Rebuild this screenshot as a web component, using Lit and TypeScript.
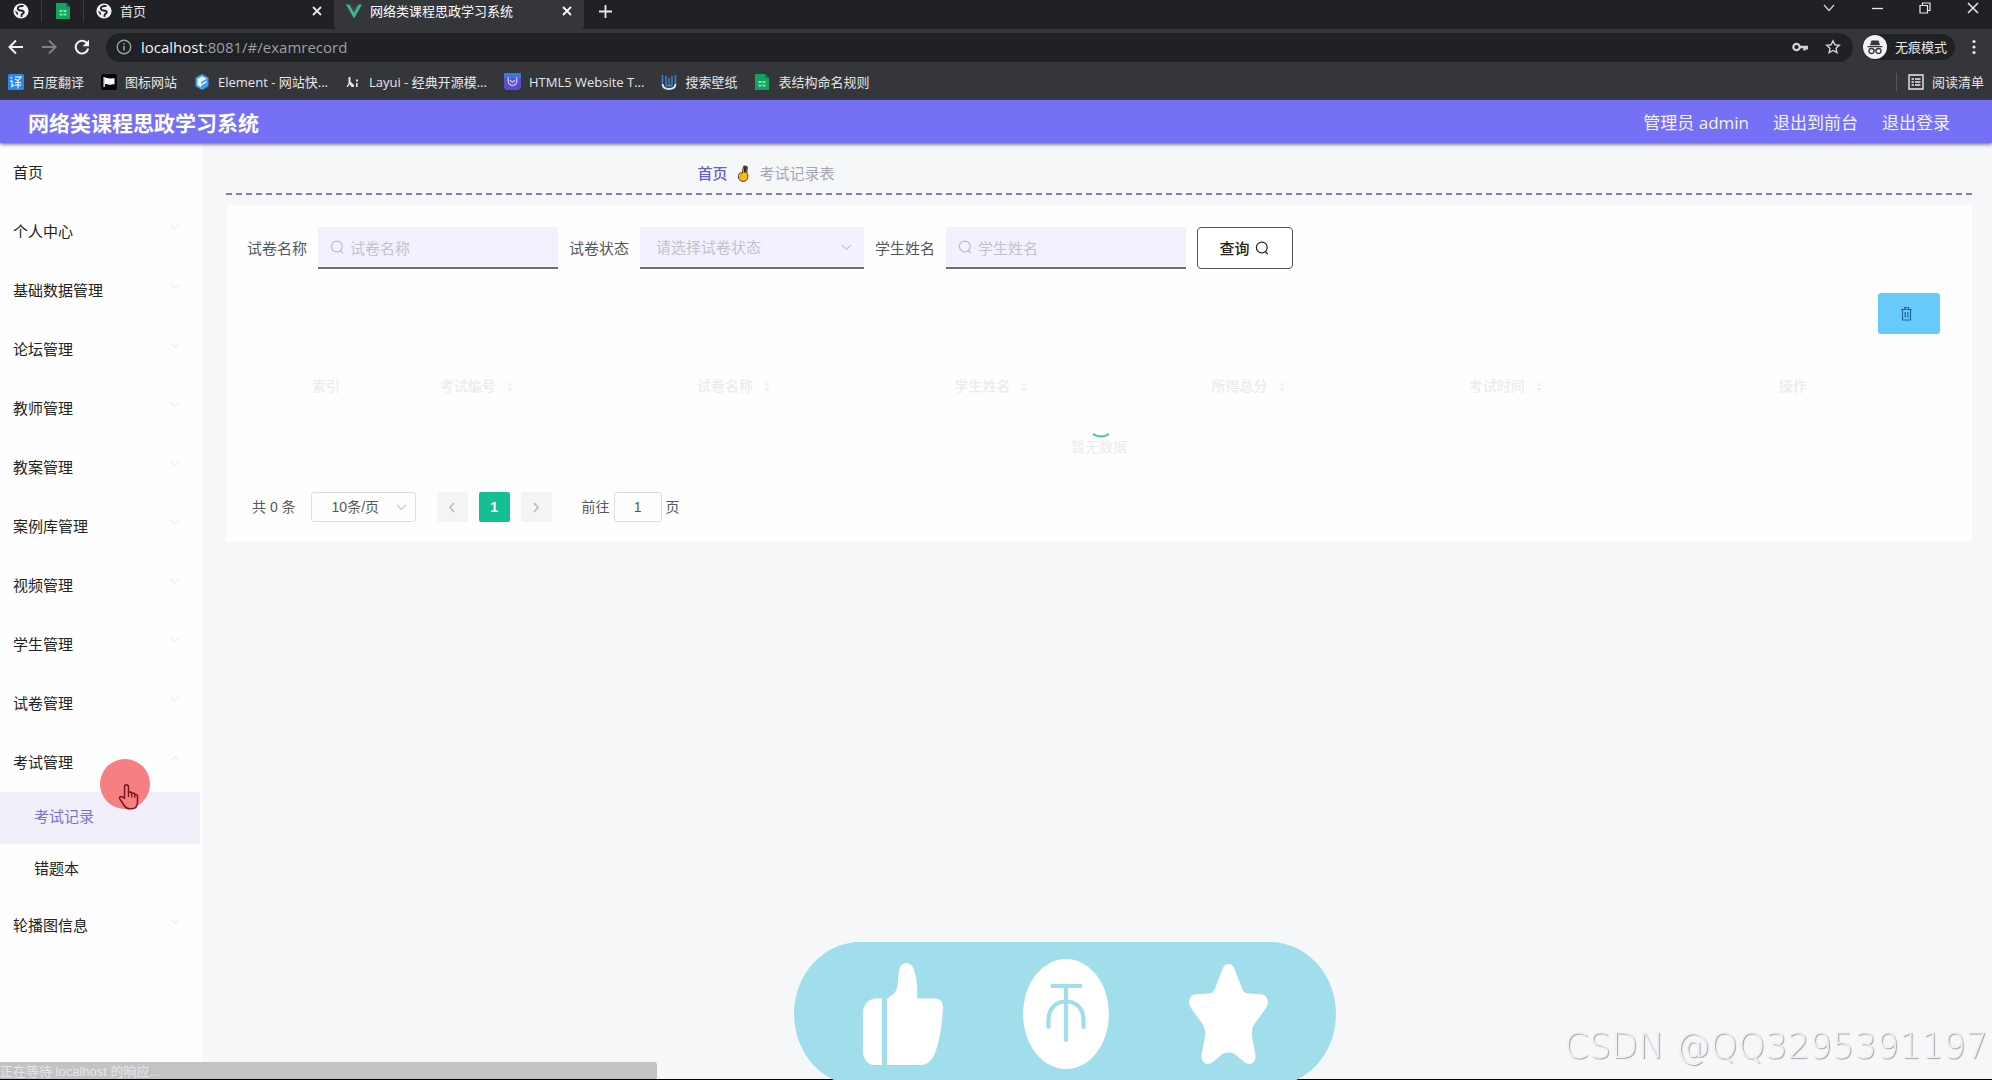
import { LitElement, html, css } from "lit";
import { customElement } from "lit/decorators.js";
import { classMap } from "lit/directives/class-map.js";

const reset = css`
  *,
  *::before,
  *::after {
    box-sizing: border-box;
  }
  button,
  input,
  select {
    font: inherit;
    color: inherit;
    margin: 0;
    padding: 0;
    border: 0;
    background: none;
    border-radius: 0;
    outline: 0;
  }
  button,
  select {
    cursor: pointer;
  }
  a {
    color: inherit;
    text-decoration: none;
  }
  svg {
    display: block;
    flex: none;
  }
`;

const globe = html`<svg width="16" height="16" viewBox="0 0 16 16">
  <circle cx="8" cy="8" r="7.6" fill="#f1f3f4" />
  <path d="M10.500 3.200C7.500 2.400 4.600 3.600 4.800 5.600c.2 1.900 2.400 1.700 4.200 2.100 1.700.4 2.200 1.300 1.500 2.400-.6 1-1.700.8-1.900 1.900-.1.700 0 1.200-.4 1.900" fill="none" stroke="#202124" stroke-width="1.900" />
  <path d="M1.800 7.500l2.800 1.800.6 2.700-1.400-.6z" fill="#202124" />
</svg>`;

const sheet = html`<svg width="16" height="18" viewBox="0 0 16 18">
  <path d="M1 1h10l4 4v12H1z" fill="#12a45f" />
  <path d="M11 1l4 4h-4z" fill="#0b7a45" />
  <path d="M4.500 8h3v2h-3zM8.500 8h3v2h-3zM4.500 11.500h3v2h-3zM8.500 11.500h3v2h-3z" fill="#7be3ad" />
</svg>`;

const vue = html`<svg width="16" height="15" viewBox="0 0 16 15">
  <path d="M0 .5h3.500L8 8.500 12.500.5H16L8 14.500z" fill="#41b883" />
  <path d="M3.500.5H6l2 3.600L10 .5h2.500L8 8.500z" fill="#35495e" />
</svg>`;

const closeIcon = html`<svg width="10" height="10" viewBox="0 0 10 10">
  <path d="M1 1l8 8M9 1L1 9" stroke="currentColor" stroke-width="1.800" />
</svg>`;

const bookmarkIcons = {
  translate: html`<svg width="16" height="16" viewBox="0 0 16 16">
    <rect width="16" height="16" rx="1.500" fill="#2b86f0" />
    <path d="M2.500 3l1.500 1.500M2 7h2v5.500l1.800-1.500M7 3h6l-3 3.500L7 5M7 8.500h6M6.500 11h7M10 7v7.500" fill="none" stroke="#fff" stroke-width="1.100" />
  </svg>`,
  flag: html`<svg width="16" height="16" viewBox="0 0 16 16">
    <rect width="16" height="16" rx="2" fill="#060606" />
    <path d="M2.500 3h1.300v10H2.500z" fill="#fff" />
    <path d="M3.800 4c2-1 3.500.6 5.200.6 1.600 0 2.500-.6 4.500-.3v6c-2-.4-3 .4-4.500.4-1.700 0-3.200-1.400-5.200-.4z" fill="#fff" />
  </svg>`,
  element: html`<svg width="16" height="16" viewBox="0 0 16 16">
    <path d="M8 0l6.500 3.800v8.400L8 16l-6.500-3.800V3.800z" fill="#3aa0f5" />
    <path d="M8 2.200l4.600 2.600L7 8v2l5.500-3.200v1.800L7 11.800v1.700L3.400 11V5z" fill="#e8f4ff" />
  </svg>`,
  layui: html`<svg width="16" height="16" viewBox="0 0 16 16">
    <path d="M3.500 3h2v4.500L9 11v2H6.500L4.500 10 3 13H1.500l2-4zM11 5.500h2v2h-2zM11 9h1.600v4H11z" fill="#e6e6e6" />
  </svg>`,
  html5: html`<svg width="17" height="17" viewBox="0 0 16 16">
    <path d="M0 0h16v14l-3 2H2l-2-2z" fill="#5a4ed0" />
    <path d="M0 0h16v5H0z" fill="#3f74d8" />
    <path d="M4 4v4c0 2 2 3.800 4 3.800s4-1.800 4-3.800V4M5.500 6.500L8 8.800l2.500-2.300" fill="none" stroke="#c9c4ff" stroke-width="1.200" />
  </svg>`,
  wallpaper: html`<svg width="16" height="16" viewBox="0 0 16 16">
    <path d="M1.500 10c.3 3.300 2.700 5 6.500 5s6.200-1.700 6.500-5" fill="none" stroke="#cfe4fa" stroke-width="2" />
    <path d="M1.500 1v9M14.500 1v9M5 2v8.500c0 2 6 2 6 0V2M8 4v8" fill="none" stroke="#3d7fc6" stroke-width="1.600" />
  </svg>`,
  sheet,
};

@customElement("browser-bar")
class BrowserBar extends LitElement {
  static styles = [
    reset,
    css`
      :host {
        display: block;
        color: #e4e6e9;
        font: 13px/18px "Open Sans", "Noto Sans CJK SC", sans-serif;
      }
      .strip {
        display: flex;
        height: 29px;
        background: #202124;
      }
      .tab {
        display: flex;
        align-items: center;
        gap: 8px;
        padding: 0 12px 7px;
        width: 250px;
      }
      .pinned {
        width: 42px;
        padding: 0 13px;
        border-right: 1px solid #3a3b3f;
        margin-bottom: 7px;
      }
      .active {
        background: #35363a;
        border-radius: 0 0 4px 4px;
        color: #fff;
      }
      .name {
        flex: 1;
        white-space: nowrap;
      }
      .plus {
        padding: 0 15px 7px;
      }
      .window {
        display: flex;
        gap: 34px;
        margin-left: auto;
        padding: 0 12px 0 0;
        height: 16px;
        align-items: center;
      }
      .tools {
        display: flex;
        align-items: center;
        height: 36px;
        background: #35363a;
        padding: 0 12px 0 8px;
      }
      .nav {
        display: flex;
        gap: 17px;
      }
      .address {
        display: flex;
        align-items: center;
        flex: 1;
        gap: 9px;
        height: 29px;
        margin: 0 10px 0 16px;
        padding: 0 12px 0 10px;
        border-radius: 15px;
        background: #202124;
        color: #9aa0a6;
        font-size: 15px;
      }
      .url {
        flex: 1;
      }
      .host {
        color: #f1f3f4;
      }
      .marks {
        display: flex;
        gap: 17px;
      }
      .incognito {
        display: flex;
        align-items: center;
        gap: 8px;
        height: 26px;
        padding-right: 8px;
        margin-right: 13px;
        border-radius: 13px;
        background: #202124;
      }
      .bookmarks {
        display: flex;
        align-items: center;
        gap: 17px;
        height: 35px;
        padding: 0 8px 2px;
        background: #35363a;
        white-space: nowrap;
      }
      .bookmark {
        display: flex;
        align-items: center;
        gap: 8px;
      }
      .reading {
        margin-left: auto;
        border-left: 1px solid #55565a;
        padding-left: 11px;
      }
    `,
  ];

  private bookmarks: [keyof typeof bookmarkIcons, string][] = [
    ["translate", "百度翻译"],
    ["flag", "图标网站"],
    ["element", "Element - 网站快..."],
    ["layui", "Layui - 经典开源模..."],
    ["html5", "HTML5 Website T..."],
    ["wallpaper", "搜索壁纸"],
    ["sheet", "表结构命名规则"],
  ];

  render() {
    return html`
      <div class="strip">
        <div class="tab pinned">${globe}</div>
        <div class="tab pinned">${sheet}</div>
        <div class="tab">
          ${globe}<span class="name">首页</span>
          <button aria-label="关闭">${closeIcon}</button>
        </div>
        <div class="tab active">
          ${vue}<span class="name">网络类课程思政学习系统</span>
          <button aria-label="关闭">${closeIcon}</button>
        </div>
        <button class="plus" aria-label="新标签页">
          <svg width="13" height="13" viewBox="0 0 13 13"><path d="M6.500 0v13M0 6.500h13" stroke="#e8eaed" stroke-width="1.800" /></svg>
        </button>
        <div class="window">
          <svg width="14" height="14" viewBox="0 0 14 14"><path d="M2 4l5 5.500L12 4" fill="none" stroke="#d5d6d8" stroke-width="1.200" /></svg>
          <svg width="14" height="14" viewBox="0 0 14 14"><path d="M2 7.500h11" stroke="#e8eaed" stroke-width="1.300" /></svg>
          <svg width="14" height="14" viewBox="0 0 14 14"><path d="M2 4.500h7.500V12H2zM4.500 4.500V2H12v7.500H9.500" fill="none" stroke="#e8eaed" stroke-width="1.200" /></svg>
          <svg width="14" height="14" viewBox="0 0 14 14"><path d="M2 2l10 10M12 2L2 12" stroke="#e8eaed" stroke-width="1.500" /></svg>
        </div>
      </div>
      <div class="tools">
        <div class="nav">
          <button aria-label="后退">
            <svg width="16" height="16" viewBox="0 0 16 16"><path d="M15 8H2M8 1.500L1.500 8 8 14.500" fill="none" stroke="#f1f3f4" stroke-width="2" /></svg>
          </button>
          <button aria-label="前进">
            <svg width="16" height="16" viewBox="0 0 16 16"><path d="M1 8h13M8 1.500L14.500 8 8 14.500" fill="none" stroke="#7d7f83" stroke-width="2" /></svg>
          </button>
          <button aria-label="重新加载">
            <svg width="16" height="16" viewBox="0 0 16 16">
              <path d="M13 4.200A6.300 6.300 0 1 0 14.200 9.500" fill="none" stroke="#f1f3f4" stroke-width="2" />
              <path d="M15 .8v6.400H8.600z" fill="#f1f3f4" />
            </svg>
          </button>
        </div>
        <div class="address">
          <svg width="16" height="16" viewBox="0 0 16 16">
            <circle cx="8" cy="8" r="6.800" fill="none" stroke="#9aa0a6" stroke-width="1.400" />
            <path d="M8 7v4.500M8 4.200v1.600" stroke="#9aa0a6" stroke-width="1.600" />
          </svg>
          <span class="url"><span class="host">localhost</span>:8081/#/examrecord</span>
          <div class="marks">
            <svg width="16" height="16" viewBox="0 0 16 16">
              <circle cx="4.500" cy="8" r="3.200" fill="none" stroke="#d0d2d5" stroke-width="2.200" />
              <path d="M7.500 8H16M12.500 8v3.500M15 8v2.500" stroke="#d0d2d5" stroke-width="2.400" />
            </svg>
            <svg width="16" height="16" viewBox="0 0 16 16">
              <path d="M8 1.800l1.900 4 4.400.5-3.300 3 .9 4.400L8 11.500l-3.900 2.200.9-4.400-3.300-3 4.400-.5z" fill="none" stroke="#d0d2d5" stroke-width="1.400" />
            </svg>
          </div>
        </div>
        <div class="incognito">
          <svg width="24" height="24" viewBox="0 0 24 24">
            <circle cx="12" cy="12" r="12" fill="#f1f3f4" />
            <path d="M8.500 5.500h7l1.500 4.700H7zM4.500 11h15v1.200h-15z" fill="#35363a" />
            <circle cx="8.500" cy="16" r="2.500" fill="none" stroke="#35363a" stroke-width="1.300" />
            <circle cx="15.500" cy="16" r="2.500" fill="none" stroke="#35363a" stroke-width="1.300" />
            <path d="M11 15.500c.6-.5 1.400-.5 2 0" fill="none" stroke="#35363a" stroke-width="1.200" />
          </svg>
          <span>无痕模式</span>
        </div>
        <button aria-label="菜单">
          <svg width="12" height="16" viewBox="0 0 12 16">
            <circle cx="6" cy="2.500" r="1.600" fill="#e8eaed" /><circle cx="6" cy="8" r="1.600" fill="#e8eaed" /><circle cx="6" cy="13.500" r="1.600" fill="#e8eaed" />
          </svg>
        </button>
      </div>
      <div class="bookmarks">
        ${this.bookmarks.map(
          ([icon, name]) => html`<a class="bookmark" href="#">${bookmarkIcons[icon]}<span>${name}</span></a>`
        )}
        <button class="bookmark reading">
          <svg width="16" height="16" viewBox="0 0 16 16">
            <path d="M1 1h14v14H1zM3.500 5H6M7 5h5.500M3.500 8H6M7 8h5.500M3.500 11H6M7 11h5.500" fill="none" stroke="#e8eaed" stroke-width="1.400" />
          </svg>
          <span>阅读清单</span>
        </button>
      </div>
    `;
  }
}

@customElement("side-menu")
class SideMenu extends LitElement {
  static styles = [
    reset,
    css`
      :host {
        display: block;
        width: 202px;
        flex: none;
        background: #fefefe;
        color: #222;
        font: 15px/20px "Noto Sans CJK SC", sans-serif;
      }
      .menu {
        display: flex;
        flex-direction: column;
        width: 200px;
      }
      .item {
        display: flex;
        align-items: center;
        justify-content: space-between;
        height: 59px;
        padding: 0 20px 2px 13px;
        text-align: left;
      }
      .item svg {
        margin-bottom: 6px;
      }
      .sub {
        display: flex;
        align-items: center;
        height: 52px;
        padding: 0 0 4px 34px;
      }
      .current {
        background: #f1effa;
        color: #7b6fd6;
      }
    `,
  ];

  private chevron(up: boolean) {
    const d = up ? "M1 6l4.500-4L10 6" : "M1 1l4.500 4L10 1";
    return html`<svg width="11" height="7" viewBox="0 0 11 7"><path d=${d} fill="none" stroke="#e6e7ea" /></svg>`;
  }

  private group(name: string, open = false) {
    return html`<button class="item" aria-expanded=${open}>${name}${this.chevron(open)}</button>`;
  }

  render() {
    const groups = ["个人中心", "基础数据管理", "论坛管理", "教师管理", "教案管理", "案例库管理", "视频管理", "学生管理", "试卷管理"];
    const subs = ["考试记录", "错题本"];
    return html`<nav class="menu">
      <a class="item" href="#">首页</a>
      ${groups.map((g) => this.group(g))} ${this.group("考试管理", true)}
      ${subs.map((s, i) => html`<a class=${classMap({ sub: true, current: i === 0 })} href="#">${s}</a>`)}
      ${this.group("轮播图信息")}
    </nav>`;
  }
}

const searchIcon = html`<svg class="search" width="14" height="14" viewBox="0 0 14 14">
  <circle cx="6.800" cy="6.500" r="5.400" fill="none" stroke="currentColor" stroke-width="1.200" />
  <path d="M10.300 10.500l2.600 2.600" stroke="currentColor" stroke-width="1.200" />
</svg>`;

const downIcon = html`<svg class="down" width="11" height="7" viewBox="0 0 11 7">
  <path d="M1 1l4.500 4.500L10 1" fill="none" stroke="#c6c8d0" stroke-width="1.200" />
</svg>`;

@customElement("exam-records")
class ExamRecords extends LitElement {
  static styles = [
    reset,
    css`
      :host {
        display: block;
        flex: 1;
        min-width: 0;
        padding: 0 20px 0 24px;
        color: #55575c;
        font: 15px/20px "Noto Sans CJK SC", sans-serif;
      }
      .crumbs {
        display: flex;
        align-items: center;
        gap: 10px;
        height: 52px;
        padding: 10px 0 0 27%;
        border-bottom: 2px dashed #8478d0;
        color: #a3a6b0;
      }
      .home {
        color: #6a5fc8;
        font-weight: 500;
      }
      .card {
        margin-top: 10px;
        padding: 22px 21px 20px;
        background: #fefefe;
      }
      .filters {
        display: flex;
        flex-wrap: wrap;
        align-items: center;
        gap: 11px;
      }
      .field {
        display: flex;
        align-items: center;
        gap: 6px;
        width: 240px;
        height: 42px;
        padding: 0 12px;
        background: #f3f1fd;
        border-bottom: 2px solid #6f6f73;
        color: #b9bcc6;
      }
      .field input,
      .field select {
        flex: 1;
        min-width: 0;
        height: 100%;
        appearance: none;
      }
      .field select,
      .field input::placeholder {
        color: #c0c3cc;
      }
      .pick {
        width: 224px;
        padding: 0 12px 0 16px;
      }
      .query {
        display: flex;
        align-items: center;
        justify-content: center;
        gap: 5px;
        width: 96px;
        height: 42px;
        padding-right: 2px;
        border: 1px solid #55575c;
        border-radius: 4px;
        background: #fff;
        color: #222;
        font-weight: 500;
      }
      .actions {
        display: flex;
        justify-content: flex-end;
        padding: 24px 11px 24px;
      }
      .remove {
        display: flex;
        align-items: center;
        width: 62px;
        height: 41px;
        padding-left: 22px;
        border-radius: 3px;
        background: #66cbfb;
        color: #24668c;
      }
      .records {
        position: relative;
      }
      .grid {
        width: 100%;
        table-layout: fixed;
        border-collapse: collapse;
        color: #ebebed;
        text-align: center;
        font-size: 14px;
      }
      .grid th {
        height: 54px;
        padding: 0;
        font-weight: 500;
        white-space: nowrap;
      }
      .grid td {
        height: 68px;
        padding: 0;
      }
      .w-check {
        width: 57px;
      }
      .w-index {
        width: 44px;
      }
      .w-data {
        width: 15.1%;
      }
      .sort {
        display: inline-block;
        margin-left: 10px;
        vertical-align: middle;
      }
      .spinner {
        position: absolute;
        top: 74px;
        left: calc(50% - 7px);
      }
      .pager {
        display: flex;
        align-items: center;
        gap: 11px;
        padding: 12px 5px 0;
        font: 14px/20px "Liberation Sans", "Noto Sans CJK SC", sans-serif;
      }
      .size {
        display: flex;
        align-items: center;
        width: 105px;
        height: 30px;
        padding: 0 8px 0 20px;
        margin: 0 10px 0 4px;
        border: 1px solid #dcdee4;
        border-radius: 3px;
      }
      .size select {
        flex: 1;
        min-width: 0;
        appearance: none;
      }
      .step {
        display: flex;
        align-items: center;
        justify-content: center;
        width: 31px;
        height: 30px;
        border-radius: 2px;
        background: #f4f4f5;
      }
      .now {
        background: #13bf93;
        color: #fff;
        font-weight: 700;
      }
      .jump {
        display: flex;
        align-items: center;
        gap: 4px;
        margin-left: 19px;
      }
      .jump input {
        width: 48px;
        height: 30px;
        border: 1px solid #dcdee4;
        border-radius: 3px;
        text-align: center;
      }
    `,
  ];

  render() {
    const columns = ["考试编号", "试卷名称", "学生姓名", "所得总分", "考试时间"];
    const sort = html`<svg class="sort" width="8" height="12" viewBox="0 0 8 12">
      <path d="M4 1l3 4H1zM4 11l3-4H1z" fill="#f1f1f3" />
    </svg>`;
    return html`
      <nav class="crumbs">
        <a class="home" href="#">首页</a>
        <svg width="12" height="17" viewBox="0 0 12 17">
          <path d="M6.500 1.200c.8-.8 1.700-.4 1.900.4.700-.8 2-.5 1.900.6L9.800 8c1 1.200 1.300 2.600 1 4.200-.4 2.600-1.900 4.200-4.500 4.200-2.900 0-4.900-1.800-4.900-4.400 0-2 .6-3.600 1.700-4.200.7-.4 1.700 0 2.100.7z" fill="#f9b929" stroke="#3f2f14" stroke-width=".9" />
          <path d="M7 1.200h3L9.300 7.500H6.800z" fill="#3f2f14" />
          <path d="M4 9.500v3" stroke="#c98a16" stroke-width=".8" />
        </svg>
        <span>考试记录表</span>
      </nav>
      <section class="card">
        <form class="filters">
          <label for="paper">试卷名称</label>
          <div class="field">${searchIcon}<input id="paper" placeholder="试卷名称" /></div>
          <label for="state">试卷状态</label>
          <div class="field pick">
            <select id="state"><option>请选择试卷状态</option></select>
            ${downIcon}
          </div>
          <label for="student">学生姓名</label>
          <div class="field">${searchIcon}<input id="student" placeholder="学生姓名" /></div>
          <button class="query" type="button">查询 ${searchIcon}</button>
        </form>
        <div class="actions">
          <button class="remove" aria-label="删除">
            <svg width="13" height="15" viewBox="0 0 13 15">
              <path d="M1 3.500h11M4.500 3.500v-2h4v2M2.500 3.500V14h8V3.500M5.200 6v5.500M7.800 6v5.500" fill="none" stroke="currentColor" stroke-width="1.200" />
            </svg>
          </button>
        </div>
        <div class="records">
          <table class="grid">
            <colgroup>
              <col class="w-check" />
              <col class="w-index" />
              ${columns.map(() => html`<col class="w-data" />`)}
              <col />
            </colgroup>
            <thead>
              <tr>
                <th></th>
                <th>索引</th>
                ${columns.map((c) => html`<th>${c}${sort}</th>`)}
                <th>操作</th>
              </tr>
            </thead>
            <tbody>
              <tr><td colspan="8">暂无数据</td></tr>
            </tbody>
          </table>
          <svg class="spinner" width="18" height="6" viewBox="0 0 18 6">
            <path d="M1 2c4.500 3.200 11.500 3.200 16 0" fill="none" stroke="#3cc5a2" stroke-width="2" />
          </svg>
        </div>
        <div class="pager">
          <span>共 0 条</span>
          <div class="size">
            <select aria-label="每页条数"><option>10条/页</option></select>
            ${downIcon}
          </div>
          <button class="step" aria-label="上一页">
            <svg width="8" height="11" viewBox="0 0 8 11"><path d="M6 1L2 5.500 6 10" fill="none" stroke="#b4b7bf" stroke-width="1.500" /></svg>
          </button>
          <button class="step now">1</button>
          <button class="step" aria-label="下一页">
            <svg width="8" height="11" viewBox="0 0 8 11"><path d="M2 1l4 4.500L2 10" fill="none" stroke="#b4b7bf" stroke-width="1.500" /></svg>
          </button>
          <label class="jump">前往<input value="1" />页</label>
        </div>
      </section>
    `;
  }
}

@customElement("app-root")
class AppRoot extends LitElement {
  static styles = [
    reset,
    css`
      :host {
        display: block;
      }
      .page {
        display: flex;
        flex-direction: column;
        min-height: 100vh;
        background: #f6f7f9;
        border-bottom: 1px solid #000;
      }
      .header {
        display: flex;
        align-items: center;
        gap: 24px;
        height: 43px;
        padding: 2px 42px 0 28px;
        background: #7670f7;
        box-shadow: 0 1px 4px #555;
        color: #f4f3ff;
        font: 17px/24px "Open Sans", "Noto Sans CJK SC", sans-serif;
        z-index: 1;
      }
      .title {
        flex: 1;
        margin: 0;
        font-size: 21px;
        font-weight: 700;
        color: #fff;
      }
      .body {
        display: flex;
        flex: 1;
      }
      .status {
        position: fixed;
        left: 0;
        bottom: 1px;
        width: 33%;
        height: 17px;
        border-radius: 0 3px 0 0;
        background: #c2c3c5;
        color: #e6e6e7;
        font: 13px/20px "Liberation Sans", "Noto Sans CJK SC", sans-serif;
      }
      .cheer {
        position: fixed;
        left: 794px;
        bottom: -6px;
        display: flex;
        align-items: center;
        justify-content: center;
        gap: 80px;
        width: 542px;
        height: 144px;
        border-radius: 66px / 72px;
        background: #a0deeb;
      }
      .mark {
        position: fixed;
        right: 4px;
        bottom: 13px;
        color: #f1f2f4;
        text-shadow: 1px 1px 1px #a2a2a6;
        font: 200 35px/42px "DejaVu Sans", sans-serif;
      }
      .pointer {
        position: fixed;
        left: 100px;
        top: 759px;
      }
    `,
  ];

  render() {
    return html`
      <div class="page">
        <browser-bar></browser-bar>
        <header class="header">
          <h1 class="title">网络类课程思政学习系统</h1>
          <span>管理员 admin</span>
          <a href="#">退出到前台</a>
          <a href="#">退出登录</a>
        </header>
        <div class="body">
          <side-menu></side-menu>
          <exam-records></exam-records>
        </div>
      </div>
      <div class="status">正在等待 localhost 的响应...</div>
      <svg class="pointer" width="50" height="51" viewBox="0 0 50 51">
        <circle cx="25" cy="25" r="25" fill="#f67f82" />
        <path
          d="M24.500 39V28c0-3 4-3 4 0v6.500c0-2 3.300-2 3.300 0v1c0-2 3-1.800 3 0v1c0-1.600 2.700-1.400 2.700.6V43c0 4-2 6.800-6 6.800h-2c-2.600 0-4-1.300-5.300-3.300l-4.400-6.700c-1-1.800 1-3 2.400-1.800z"
          fill="#f67f82" stroke="#7a1622" stroke-width="1.500" />
        <path d="M28.500 34v4M31.800 35v3.500M34.800 36v3" stroke="#7a1622" stroke-width="1.200" />
      </svg>
      <div class="cheer">
        <svg width="80" height="102" viewBox="0 0 80 102" fill="#fff">
          <path d="M19 35.500H13C5 36 0 42 0 50V88c0 8 5 14 11 14h8z" />
          <path d="M24 35.500C30 32 33 29 34 25c1.500-6 1-11 2-17C37-2 48-3 51 7c3 8 3.500 18 3 28.500h17c6 0 9 3 9 9C79 64 76 80 72 90c-3 8-8 12-15 12H24z" />
        </svg>
        <svg width="86" height="110" viewBox="0 0 86 110">
          <ellipse cx="43" cy="55" rx="43" ry="55" fill="#fff" />
          <path d="M29.500 27h28M43 27v54M25.500 68V61c0-12 8-18.500 17.500-18.500S60.500 49 60.500 61v7" fill="none" stroke="#a0deeb" stroke-width="4.200" stroke-linecap="round" />
        </svg>
        <svg width="79" height="100" viewBox="0 0 79 100" fill="#fff">
          <path d="M39.500 0c3 0 5 2 6 5l7 18c1.500 4.500 3 6 7 6.500l12 .8c7 .7 9 7 6 13l-10 14c-4 5-5 8-4.500 15l3.500 19c.5 8-6 10.500-11 7l-9-7.500c-4.500-3.500-9.500-3.500-14 0l-9 7.500c-5 3.500-11.500 1-11-7L16 72.300c.5-7-.5-10-4.500-15l-10-14c-3-6-1-12.300 6-13l12-.8c4-.5 5.500-2 7-6.500l7-18c1-3 3-5 6-5z" />
        </svg>
      </div>
      <div class="mark">CSDN @QQ3295391197</div>
    `;
  }
}
